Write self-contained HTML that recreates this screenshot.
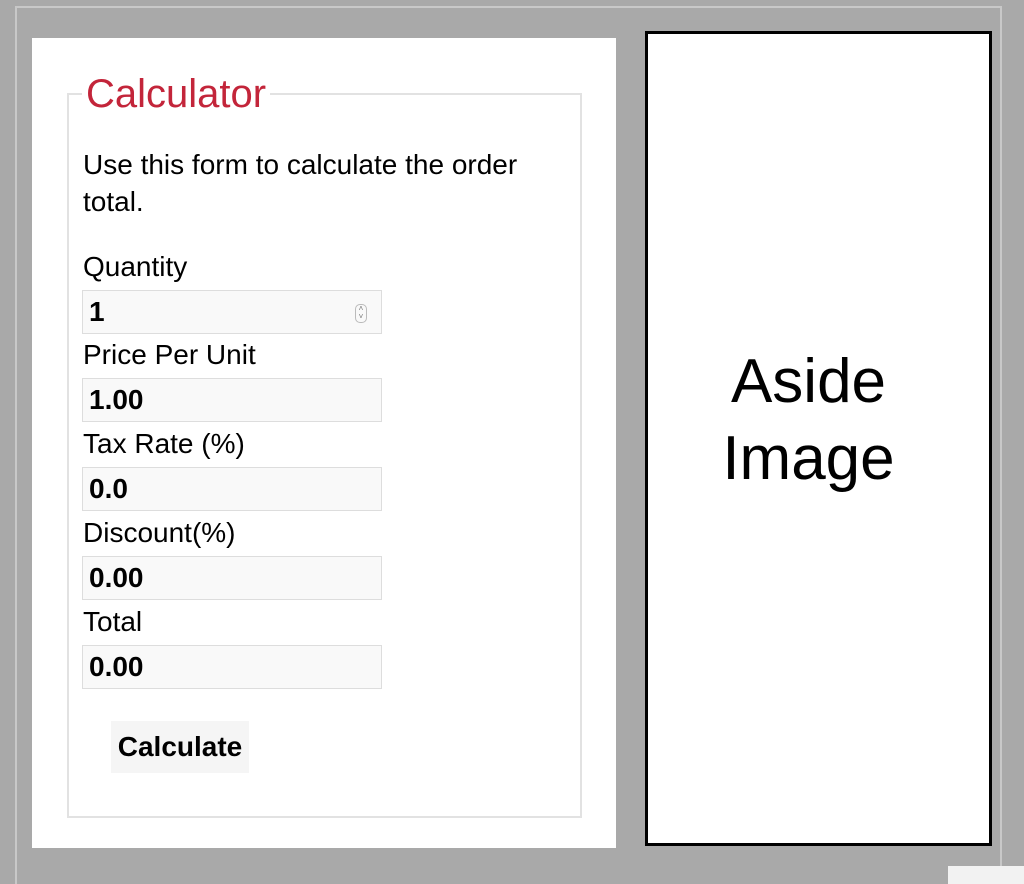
<!DOCTYPE html>
<html><head><style>
html,body{margin:0;padding:0}
body{width:1024px;height:884px;background:#a9a9a9;position:relative;overflow:hidden;font-family:"Liberation Sans",Arial,sans-serif;color:#000}
.a{position:absolute}
.lbl{position:absolute;left:83px;font-size:28px;line-height:30px}
.inp{position:absolute;left:82px;background:#f9f9f9;border:1px solid #ddd;font-weight:bold;font-size:28px;line-height:42px;padding-left:6px;box-sizing:border-box;width:300px;height:44px}
</style></head><body>
<div class="a" style="left:15px;top:6px;width:987px;height:878px;border-left:2px solid #c8c8c8;border-top:2px solid #c8c8c8;border-right:2px solid #c8c8c8;box-sizing:border-box"></div>
<div class="a" style="left:32px;top:38px;width:584px;height:810px;background:#fff"></div>
<div class="a" style="left:67px;top:93px;width:515px;height:725px;border:2px solid #e2e2e2;box-sizing:border-box"></div>
<div class="a" style="left:82px;top:72px;background:#fff;padding:0 4px;color:#c3253a;font-size:40px;line-height:44px">Calculator</div>
<div class="a" style="left:83px;top:146px;width:470px;font-size:28px;line-height:37px">Use this form to calculate the order total.</div>
<div class="lbl" style="top:252px">Quantity</div>
<div class="inp" style="top:290px">1<span style="position:absolute;right:14px;top:13px;width:10px;height:17px;border:1px solid #bbb;border-radius:5px;font-size:8px;line-height:8px;font-weight:normal;color:#777;text-align:center">˄<br>˅</span></div>
<div class="lbl" style="top:340px">Price Per Unit</div>
<div class="inp" style="top:378px">1.00</div>
<div class="lbl" style="top:429px">Tax Rate (%)</div>
<div class="inp" style="top:467px">0.0</div>
<div class="lbl" style="top:518px">Discount(%)</div>
<div class="inp" style="top:556px">0.00</div>
<div class="lbl" style="top:607px">Total</div>
<div class="inp" style="top:645px">0.00</div>
<div class="a" style="left:111px;top:721px;width:138px;height:52px;background:#f5f5f5;font-weight:bold;font-size:28px;line-height:52px;text-align:center">Calculate</div>
<div class="a" style="left:645px;top:31px;width:347px;height:815px;border:3px solid #000;background:#fff;box-sizing:border-box;display:flex;align-items:center;justify-content:center;text-align:center;font-size:62px;line-height:77px;padding-bottom:38px;padding-right:20px">Aside<br>Image</div>
<div class="a" style="left:948px;top:866px;width:76px;height:18px;background:#f2f2f2"></div>
</body></html>
